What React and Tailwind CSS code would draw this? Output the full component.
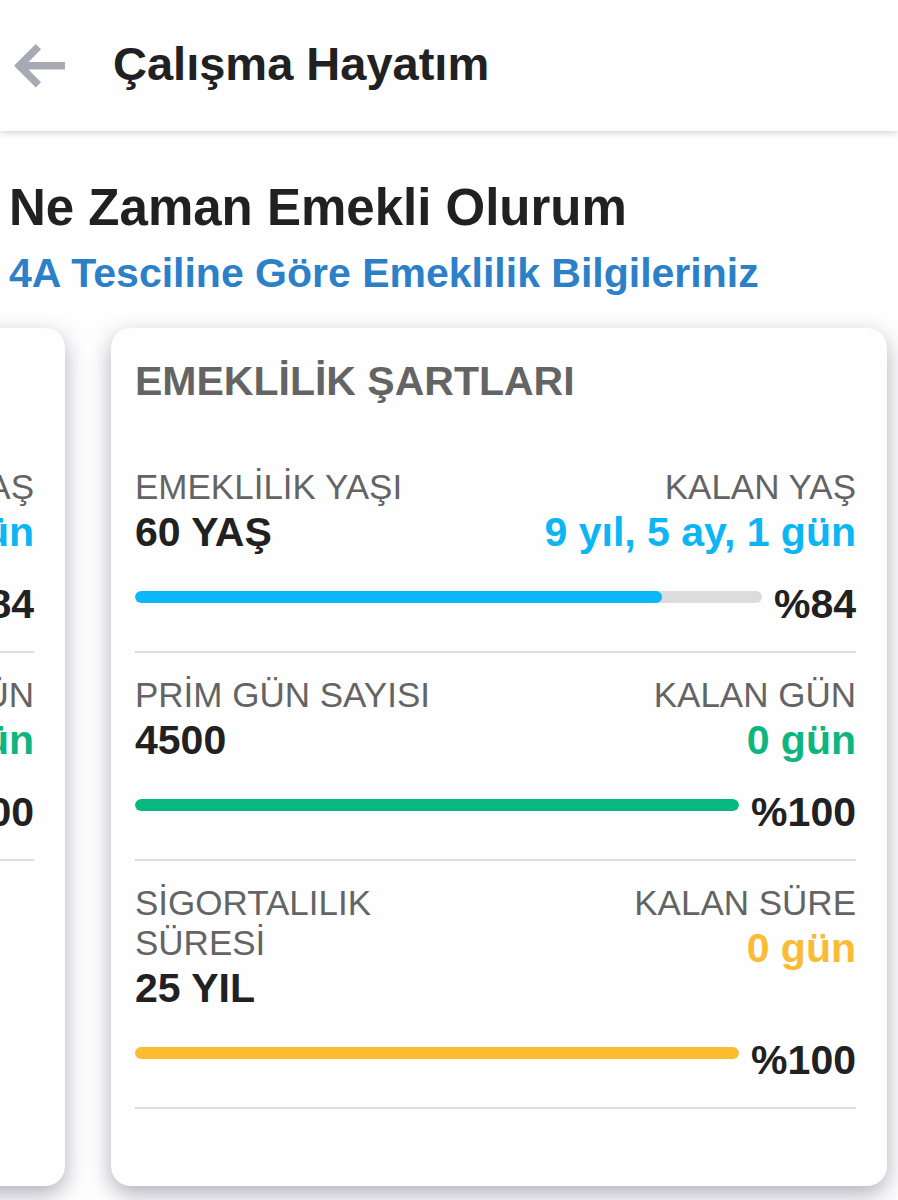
const currentRows = [
  { label: 'YAŞ', value: '50 yıl', remainingLabel: 'KALAN YAŞ', remaining: '9 yıl, 5 ay, 1 gün', percent: 84, text: 'text-[#0cb5f3]', bar: 'bg-[#0ab8fa]' },
  { label: 'PRİM GÜN', value: '4500', remainingLabel: 'KALAN GÜN', remaining: '0 gün', percent: 100, text: 'text-[#0fb57f]', bar: 'bg-[#08b97f]' },
];

const requirementRows = [
  { label: 'EMEKLİLİK YAŞI', value: '60 YAŞ', remainingLabel: 'KALAN YAŞ', remaining: '9 yıl, 5 ay, 1 gün', percent: 84, text: 'text-[#0cb5f3]', bar: 'bg-[#0ab8fa]' },
  { label: 'PRİM GÜN SAYISI', value: '4500', remainingLabel: 'KALAN GÜN', remaining: '0 gün', percent: 100, text: 'text-[#0fb57f]', bar: 'bg-[#08b97f]' },
  { label: 'SİGORTALILIK SÜRESİ', value: '25 YIL', remainingLabel: 'KALAN SÜRE', remaining: '0 gün', percent: 100, text: 'text-[#fbbb35]', bar: 'bg-[#fdbc30]' },
];

function Row({ row }) {
  return (
    <div className="mb-[22px] border-b-2 border-[#dcdde0] pb-[22px] last:mb-0">
      <div className="flex items-start justify-between">
        <div className="w-1/2">
          <div className="text-[35px] leading-[40px] text-[#646464]">{row.label}</div>
          <div className="text-[41px] leading-[50px] font-bold">{row.value}</div>
        </div>
        <div className="whitespace-nowrap text-right">
          <div className="text-[35px] leading-[40px] text-[#646464]">{row.remainingLabel}</div>
          <div className={`text-[41px] leading-[50px] font-bold ${row.text}`}>{row.remaining}</div>
        </div>
      </div>
      <div className="mt-[22px] flex items-start gap-3">
        <div
          role="progressbar"
          aria-label={row.label}
          aria-valuenow={row.percent}
          className="mt-3 h-3 flex-1 overflow-hidden rounded-full bg-[#dcdcdc]"
        >
          <div className={`h-full rounded-full ${row.bar}`} style={{ width: `${row.percent}%` }} />
        </div>
        <div className="text-[41px] leading-[50px] font-bold">%{row.percent}</div>
      </div>
    </div>
  );
}

function Card({ title, rows }) {
  return (
    <section className="w-[calc(100%-111px)] shrink-0 rounded-[20px] bg-[#fefefe] pt-[28px] pr-[31px] pb-[77px] pl-[24px] shadow-[0_8px_22px_rgba(40,40,72,0.36)]">
      <h3 className="mb-[61px] text-[41px] leading-[50px] font-bold text-[#646464]">{title}</h3>
      {rows.map((row) => (
        <Row key={row.label} row={row} />
      ))}
    </section>
  );
}

export default function App() {
  return (
    <div className="min-h-screen overflow-hidden bg-[#fefefe] font-['Liberation_Sans',Arial,sans-serif] text-[#212121]">
      <header className="flex h-[131px] items-center gap-12 bg-[#fefefe] pl-[14px] shadow-[0_1px_8px_rgba(0,0,0,0.2)]">
        <button type="button" aria-label="Geri">
          <svg width="51" height="44" viewBox="0 0 51 44" fill="#a7aab4" className="block">
            <path d="M0 21.7 21.8 0 27 5.2 14.5 18H51V25.4H14.5L27 38.3 21.8 43.5Z" />
          </svg>
        </button>
        <h1 className="pb-1 text-[47px] leading-[56px] font-bold">Çalışma Hayatım</h1>
      </header>
      <main>
        <div className="px-[9px] pt-[47px]">
          <h2 className="text-[51px] leading-[60px] font-bold">Ne Zaman Emekli Olurum</h2>
          <p className="mt-[10px] text-[41px] leading-[50px] font-bold text-[#2c80c8]">4A Tesciline Göre Emeklilik Bilgileriniz</p>
        </div>
        <div className="flex justify-end gap-[46px] pt-[30px] pr-[11px] pb-[14px]">
          <Card title="MEVCUT DURUM" rows={currentRows} />
          <Card title="EMEKLİLİK ŞARTLARI" rows={requirementRows} />
        </div>
      </main>
    </div>
  );
}
